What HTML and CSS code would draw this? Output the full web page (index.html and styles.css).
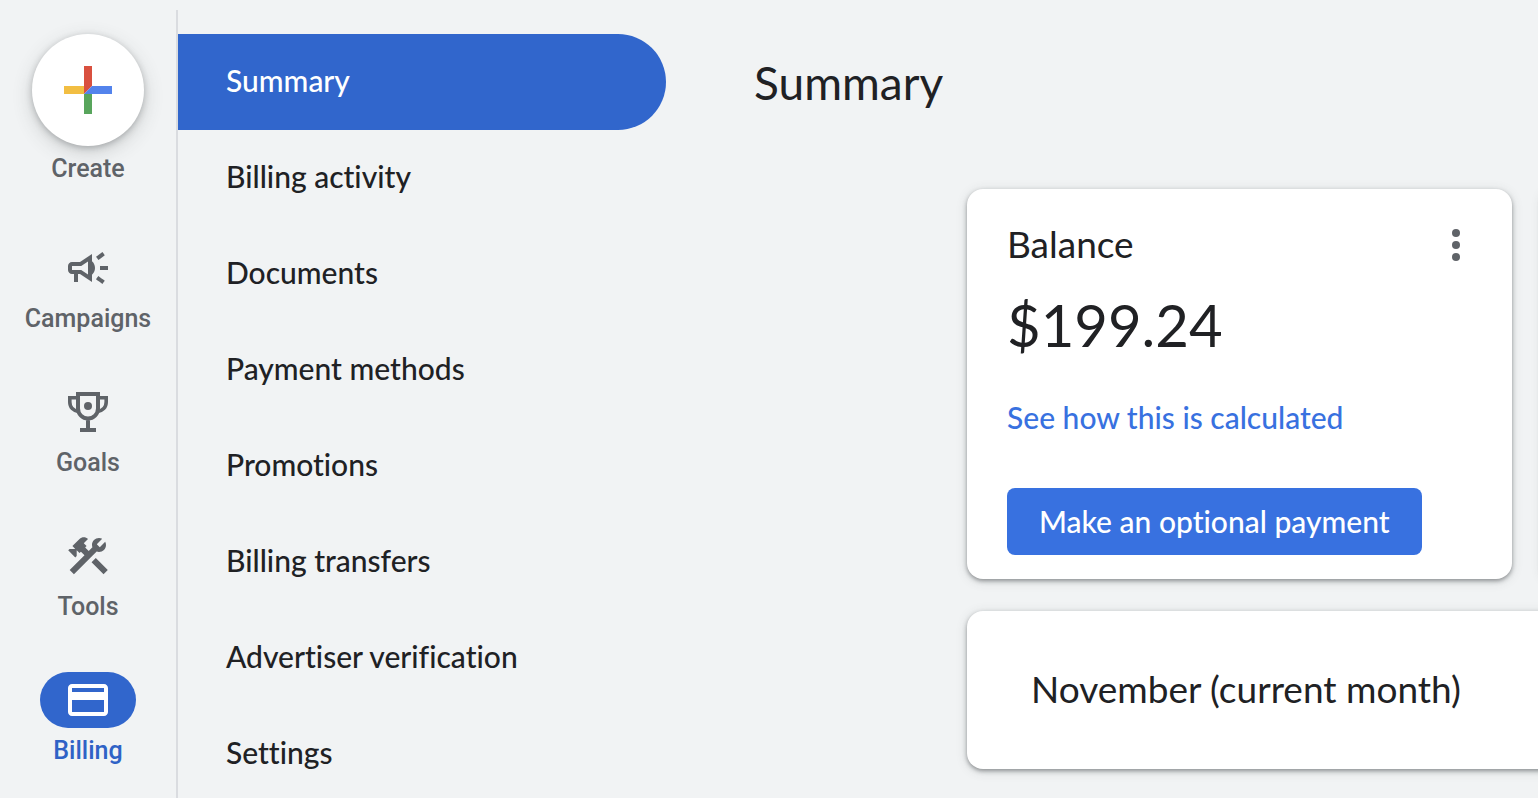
FILE: index.html
```html
<!DOCTYPE html>
<html lang="en">
<head>
    <meta charset="UTF-8">
    <meta name="viewport" content="width=device-width, initial-scale=1.0">
    <title>Billing - Summary</title>
    <link rel="stylesheet" href="styles.css">
</head>
<body>
    <nav class="rail" aria-label="Main">
        <button class="rail-item create" type="button">
            <span class="create-circle">
                <svg width="48" height="48" viewBox="0 0 48 48" aria-hidden="true">
                    <path fill="#d9503f" d="M20 0h8v20l-8 8z"/>
                    <path fill="#f2be42" d="M0 20h20v8H0z"/>
                    <path fill="#58a55c" d="M20 28h8v20h-8z"/>
                    <path fill="#5383ec" d="M28 20h20v8H20z"/>
                </svg>
            </span>
            <span class="rail-label">Create</span>
        </button>
        <a class="rail-item" href="#campaigns">
            <span class="rail-icon">
                <svg width="48" height="48" viewBox="0 0 24 24" fill="currentColor" aria-hidden="true">
                    <path d="M18 11v2h4v-2zM16 17.61c.96.71 2.21 1.65 3.2 2.39.4-.53.8-1.07 1.2-1.6-.99-.74-2.24-1.68-3.2-2.4-.4.54-.8 1.08-1.2 1.61zM20.4 5.6c-.4-.53-.8-1.07-1.2-1.6-.99.74-2.24 1.68-3.2 2.4.4.53.8 1.07 1.2 1.6.96-.72 2.21-1.65 3.2-2.4zM15.5 12c0-1.33-.58-2.53-1.5-3.35v6.69c.92-.81 1.5-2.01 1.5-3.34z"/>
                    <path fill-rule="evenodd" d="M4 9c-1.1 0-2 .9-2 2v2c0 1.1.9 2 2 2h1v4h2v-4h1l6 4V5L8 9zM12 8.7v6.6L8.6 13H4v-2h4.6z"/>
                </svg>
            </span>
            <span class="rail-label">Campaigns</span>
        </a>
        <a class="rail-item" href="#goals">
            <span class="rail-icon">
                <svg width="48" height="48" viewBox="0 0 24 24" fill="none" stroke="currentColor" stroke-width="2" aria-hidden="true">
                    <path d="M7 3h10v7.3a5 5 0 0 1-10 0zM12 15v6M8 21h8"/>
                    <path stroke-width="1.8" d="M7 4.9H2.9V7c0 2.7 1.8 4.5 4.6 4.9M17 4.9h4.1V7c0 2.7-1.8 4.5-4.6 4.9"/>
                    <circle cx="12" cy="9" r="2" fill="currentColor" stroke="none"/>
                </svg>
            </span>
            <span class="rail-label">Goals</span>
        </a>
        <a class="rail-item" href="#tools">
            <span class="rail-icon">
                <svg width="48" height="48" viewBox="0 0 24 24" fill="currentColor" aria-hidden="true">
                    <path d="M13.78 15.17l2.12-2.12 6 6-2.12 2.12zM17.5 10c1.93 0 3.5-1.57 3.5-3.5 0-.58-.16-1.12-.41-1.6l-2.7 2.7-1.49-1.49 2.7-2.7c-.48-.25-1.02-.41-1.6-.41C15.57 3 14 4.57 14 6.5c0 .41.08.8.21 1.16l-1.85 1.85-1.78-1.78.71-.71-1.41-1.41L12 3.49c-1.17-1.17-3.07-1.17-4.24 0L4.22 7.03l1.41 1.41H2.81l-.71.71 3.54 3.54.71-.71V9.15l1.41 1.41.71-.71 1.78 1.78-7.41 7.41 2.12 2.12L16.34 9.79c.36.13.75.21 1.16.21z"/>
                </svg>
            </span>
            <span class="rail-label">Tools</span>
        </a>
        <a class="rail-item active" href="#billing" aria-current="page">
            <span class="rail-icon">
                <svg width="48" height="48" viewBox="0 0 24 24" fill="currentColor" aria-hidden="true">
                    <path d="M20 4H4c-1.11 0-2 .89-2 2v12c0 1.11.89 2 2 2h16c1.11 0 2-.89 2-2V6c0-1.11-.89-2-2-2zm0 14H4v-6h16v6zm0-10H4V6h16v2z"/>
                </svg>
            </span>
            <span class="rail-label">Billing</span>
        </a>
    </nav>

    <nav class="side-menu" aria-label="Billing">
        <a class="menu-item selected" href="#summary">Summary</a>
        <a class="menu-item" href="#activity">Billing activity</a>
        <a class="menu-item" href="#documents">Documents</a>
        <a class="menu-item" href="#methods">Payment methods</a>
        <a class="menu-item" href="#promotions">Promotions</a>
        <a class="menu-item" href="#transfers">Billing transfers</a>
        <a class="menu-item" href="#verification">Advertiser verification</a>
        <a class="menu-item" href="#settings">Settings</a>
    </nav>

    <main class="content">
        <h1>Summary</h1>
        <div class="cards">
            <section class="card balance">
                <div class="card-header">
                    <h2>Balance</h2>
                    <button class="more" type="button" aria-label="More options">
                        <svg width="48" height="48" viewBox="0 0 24 24" fill="currentColor" aria-hidden="true">
                            <circle cx="12" cy="6" r="2"/>
                            <circle cx="12" cy="12" r="2"/>
                            <circle cx="12" cy="18" r="2"/>
                        </svg>
                    </button>
                </div>
                <p class="amount">$199.24</p>
                <a class="calc-link" href="#calculated">See how this is calculated</a>
                <button class="pay" type="button">Make an optional payment</button>
            </section>
            <div class="card"></div>
            <section class="card month">
                <h2>November (current month)</h2>
            </section>
        </div>
    </main>
</body>
</html>
```
FILE: styles.css
```css
* {
    box-sizing: border-box;
}
body {
    display: flex;
    min-height: 100vh;
    margin: 0;
    overflow: hidden;
    background-color: #f1f3f4;
    color: #202124;
    font-family: Lato, 'Open Sans', sans-serif;
    font-variant-ligatures: none;
}
h1, h2, p {
    margin: 0;
    font-weight: 400;
}
a {
    text-decoration: none;
}
button {
    border: 0;
    padding: 0;
    background: none;
    font-family: inherit;
    font-variant-ligatures: none;
    cursor: pointer;
}
svg {
    display: block;
}

/* left icon rail */
.rail {
    display: flex;
    flex-direction: column;
    flex: 0 0 176px;
    gap: 50px;
    padding-top: 34px;
}
.rail-item {
    display: flex;
    flex-direction: column;
    align-items: center;
    gap: 8px;
    color: #5f6368;
    font-family: Roboto, sans-serif;
}
.create {
    margin-bottom: 6px;
}
.create-circle {
    display: flex;
    align-items: center;
    justify-content: center;
    width: 112px;
    height: 112px;
    border-radius: 50%;
    background-color: #fff;
    box-shadow: 0 2px 6px rgba(60, 64, 67, 0.3), 0 6px 20px rgba(60, 64, 67, 0.2);
}
.rail-icon {
    display: flex;
    align-items: center;
    justify-content: center;
    width: 96px;
    height: 56px;
    border-radius: 28px;
}
.rail-label {
    font-size: 25px;
    font-weight: 500;
    line-height: 30px;
}
.active {
    color: #2f62c6;
}
.active .rail-icon {
    background-color: #3166cc;
    color: #fff;
}

/* billing menu */
.side-menu {
    flex: 0 0 490px;
    margin-top: 10px;
    padding-top: 24px;
    border-left: 2px solid #dadce0;
}
.menu-item {
    display: flex;
    align-items: center;
    height: 96px;
    padding: 0 48px 4px;
    border-radius: 0 48px 48px 0;
    color: #202124;
    font-size: 30px;
    font-weight: 500;
}
.selected {
    background-color: #3166cc;
    color: #fff;
}

.content {
    flex: 1;
    min-width: 0;
    padding: 51px 0 24px 88px;
    overflow: hidden;
}
h1 {
    font-size: 46px;
    line-height: 64px;
}
/* the second column runs off the right edge */
.cards {
    display: grid;
    grid-template-columns: 1fr 24px;
    gap: 32px 30px;
    margin: 74px -28px 0 213px;
}
.card {
    border-radius: 16px;
    background-color: #fff;
    box-shadow: 0 2px 4px rgba(60, 64, 67, 0.5), 0 2px 12px rgba(60, 64, 67, 0.15);
}
h2 {
    font-size: 37px;
    line-height: 46px;
}
.balance {
    display: flex;
    flex-direction: column;
    align-items: flex-start;
    padding: 32px 32px 24px 40px;
}
.card-header {
    display: flex;
    justify-content: space-between;
    align-self: stretch;
}
.more {
    color: #5f6368;
}
.amount {
    margin-top: 16px;
    font-size: 58px;
    line-height: 80px;
}
.calc-link {
    margin-top: 34px;
    color: #3871e0;
    font-size: 30px;
    font-weight: 500;
    line-height: 36px;
}
.pay {
    margin-top: 53px;
    padding: 0 32px;
    border-radius: 8px;
    background-color: #3871e0;
    color: #fff;
    font-size: 30px;
    font-weight: 500;
    line-height: 67px;
}
.month {
    grid-column: span 2;
    padding: 55px 64px 57px;
}
```
